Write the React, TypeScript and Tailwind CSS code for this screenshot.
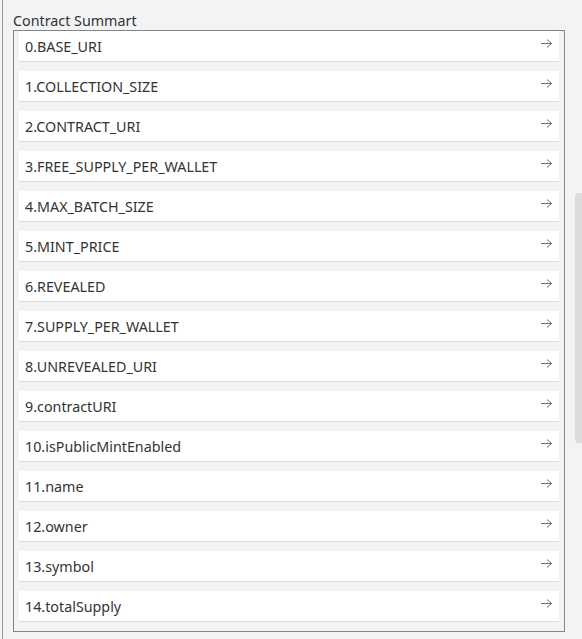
const ITEMS = [
  'BASE_URI',
  'COLLECTION_SIZE',
  'CONTRACT_URI',
  'FREE_SUPPLY_PER_WALLET',
  'MAX_BATCH_SIZE',
  'MINT_PRICE',
  'REVEALED',
  'SUPPLY_PER_WALLET',
  'UNREVEALED_URI',
  'contractURI',
  'isPublicMintEnabled',
  'name',
  'owner',
  'symbol',
  'totalSupply',
]

function Arrow() {
  return (
    <svg width="11" height="10" viewBox="0 0 11 10" className="mb-[5px] shrink-0" fill="none" stroke="#6b6b6b" strokeWidth="1">
      <path d="M0 4.5H10.5" />
      <path d="M6 0.5L10.5 4.5L6 8.5" />
    </svg>
  )
}

export default function App() {
  return (
    <div className="relative h-[639px] overflow-hidden bg-[#f2f3f5] font-['Noto_Sans','Liberation_Sans',sans-serif] text-[#333]">
      <div className="ml-[2px] h-full border-l border-[#9a9a9a] pl-[10px] pt-[11px]">
        <div className="h-[19px] text-[14.3px] leading-[20px]">Contract Summart</div>
        <div className="w-[552px] border border-[#858585] px-[5px] pb-[9px]">
          {ITEMS.map((item, i) => (
            <div
              key={item}
              className="mb-[9px] flex h-[31px] items-center justify-between border-b border-[#dcdcdc] bg-white pl-[6px] pr-[7px] last:mb-0"
            >
              <span className="mt-[2px] text-[14.3px] leading-[20px]">
                {i}.{item}
              </span>
              <Arrow />
            </div>
          ))}
        </div>
      </div>
      <div className="absolute left-[575px] top-[193px] h-[250px] w-[12px] rounded-[4px] bg-[#dcdcdc]" />
    </div>
  )
}
